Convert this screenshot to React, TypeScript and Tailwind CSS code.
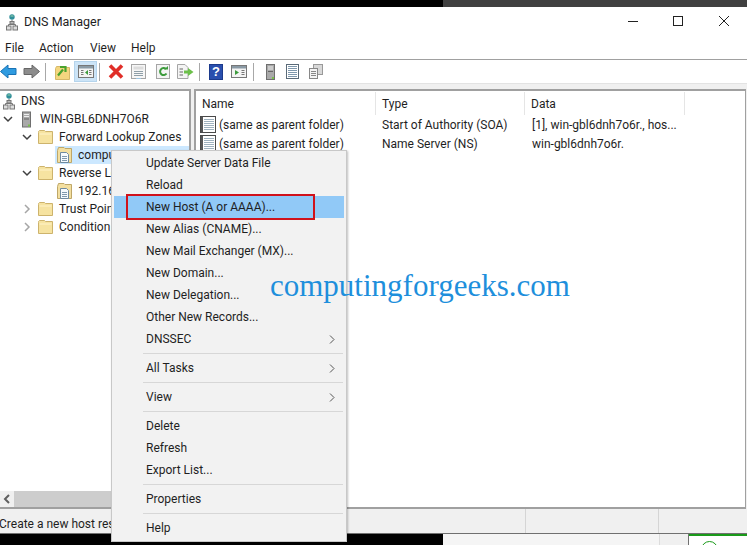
import React from "react";

const Folder = () => (
  <svg width="15" height="14" viewBox="0 0 15 14" className="shrink-0">
    <path d="M.5 2.500V13.500H14.500V1.500H7.500L6.500 .5H1.500L.5 1.500Z" fill="#f6e3a1" stroke="#cdb36c" />
    <path d="M1.500 4H13.500" stroke="#fff3c9" />
  </svg>
);
const Zone = () => (
  <svg width="15" height="16" viewBox="0 0 15 16" className="shrink-0">
    <path d="M.5 3.500V15.500H14.500V1.500H8L7 .5H1.500Z" fill="#f3dfa0" stroke="#bfa768" />
    <path d="M3.500 5.500H9.500L11.500 7.500V15.500H3.500Z" fill="#f6fafd" stroke="#6f8aa0" />
    <path d="M5 9.500H10M5 11.500H10M5 13.500H10" stroke="#7f98ad" />
  </svg>
);
const NetIcon = () => (
  <svg width="12" height="17" viewBox="0 0 12 17" className="shrink-0">
    <circle cx="6" cy="3" r="2.700" fill="#2f8f9a" />
    <path d="M4.500 2H7.500" stroke="#9ad0a8" />
    <path d="M6 6V10M2.500 12V10.500H9.500V12" stroke="#777" fill="none" />
    <rect x="4" y="7.500" width="4" height="2.500" fill="#bbb" stroke="#777" />
    <rect x=".5" y="12" width="4.500" height="4" fill="#ddd" stroke="#777" />
    <rect x="7" y="12" width="4.500" height="4" fill="#ddd" stroke="#777" />
  </svg>
);
const Server = ({ h = 16 }: { h?: number }) => (
  <svg width="9" height={h} viewBox="0 0 9 16" className="shrink-0">
    <rect x=".5" y=".5" width="8" height="15" fill="#a9a9a9" stroke="#6f6f6f" />
    <path d="M2 3H7M2 5H7" stroke="#eee" />
    <rect x="2" y="7" width="5" height="1" fill="#666" />
    <rect x="6" y="13" width="2" height="2" fill="#79c04a" />
  </svg>
);
const Chevron = ({ open, light }: { open?: boolean; light?: boolean }) => (
  <svg width="10" height="10" viewBox="0 0 10 10" className="shrink-0">
    <path
      d={open ? "M1 3L5 7L9 3" : "M3 1L7 5L3 9"}
      fill="none"
      stroke={light ? "#a6a6a6" : "#404040"}
      strokeWidth="1.500"
    />
  </svg>
);
const RecordIcon = () => (
  <svg width="16" height="17" viewBox="0 0 16 17" className="shrink-0">
    <rect x=".5" y=".5" width="15" height="16" fill="#fff" stroke="#4a4a4a" />
    <rect x="1" y="1" width="2" height="15" fill="#555" />
    <path d="M4 3.500H14M4 5.500H14M4 7.500H14M4 9.500H14M4 11.500H14M4 13.500H14" stroke="#9fb2bf" />
  </svg>
);

const Sep = ({ ml, mr }: { ml: string; mr: string }) => (
  <div className={`w-px h-[18px] bg-[#a8a8a8] shrink-0 ${ml} ${mr}`} />
);

const Toolbar = () => (
  <div className="h-[23px] flex items-center bg-white shrink-0">
    <svg width="17" height="15" viewBox="0 0 17 15" className="shrink-0">
      <path d="M8 1L.5 7.500L8 14V10.500H16V4.500H8Z" fill="#2f9be0" stroke="#1872b5" />
    </svg>
    <svg width="17" height="15" viewBox="0 0 17 15" className="ml-[6px] shrink-0">
      <path d="M9 1L16.500 7.500L9 14V10.500H1V4.500H9Z" fill="#8c8c8c" stroke="#666" />
    </svg>
    <Sep ml="ml-[5px]" mr="mr-[9px]" />
    <svg width="15" height="16" viewBox="0 0 15 16" className="shrink-0">
      <path d="M.5 4.500V15.500H14.500V3.500H8L7 2.500H1.500Z" fill="#f4d67f" stroke="#d6b869" />
      <path d="M3 11.500L8 5.500M5 3H10.500V8" fill="none" stroke="#4aa32e" strokeWidth="2.200" />
    </svg>
    <div className="ml-[4px] mr-[2px] w-[23px] h-[21px] bg-[#cce4f7] border border-[#b5d4ec] flex items-center justify-center shrink-0">
      <svg width="16" height="13" viewBox="0 0 16 13">
        <rect x=".5" y=".5" width="15" height="12" fill="#f4f4f4" stroke="#777" />
        <rect x="1" y="1" width="14" height="2.500" fill="#8a9aa5" />
        <path d="M3 5.500H5.500M3 7.500H5.500M3 9.500H5.500M11 5.500H13.500M11 7.500H13.500M11 9.500H13.500" stroke="#777" />
        <path d="M10 5L7 7.500L10 10Z" fill="#3c9b3c" />
      </svg>
    </div>
    <Sep ml="" mr="mr-[8px]" />
    <svg width="16" height="15" viewBox="0 0 16 15" className="shrink-0">
      <path d="M2 1.500L14 13.500M14 1.500L2 13.500" stroke="#e02e28" strokeWidth="3.600" />
    </svg>
    <svg width="15" height="15" viewBox="0 0 15 15" className="ml-[7px] shrink-0">
      <rect x=".5" y=".5" width="14" height="14" fill="#f6f6f6" stroke="#a5a5a5" />
      <rect x="2.500" y="2.500" width="10" height="3" fill="#dcdcdc" />
      <path d="M3 7.500H12M3 9.500H12M3 11.500H12" stroke="#8f9fa8" />
      <path d="M5 14.500H10" stroke="#9bc4e2" />
    </svg>
    <svg width="14" height="15" viewBox="0 0 14 15" className="ml-[10px] shrink-0">
      <rect x=".5" y=".5" width="13" height="14" fill="#f4f4f4" stroke="#a5a5a5" />
      <path d="M10 5A3.500 3.500 0 1 0 10.500 9.500" fill="none" stroke="#3c9b3c" strokeWidth="2" />
      <path d="M8 5.500H12V2Z" fill="#3c9b3c" />
    </svg>
    <svg width="17" height="15" viewBox="0 0 17 15" className="ml-[7px] shrink-0">
      <path d="M.5 .5H8L11 3.500V14.500H.5Z" fill="#f4f4f4" stroke="#a5a5a5" />
      <path d="M2.500 5H6M2.500 8H6M2.500 11H6" stroke="#666" />
      <path d="M7 6.500H11V4L16.500 8L11 12V9.500H7Z" fill="#6cc04a" />
    </svg>
    <Sep ml="ml-[5px]" mr="mr-[9px]" />
    <div className="w-[14px] h-[16px] bg-[#2a4fae] border border-[#1c3a8c] flex items-center justify-center shrink-0 text-white text-[13px] font-bold leading-none [font-family:'Liberation_Sans',sans-serif]">
      ?
    </div>
    <svg width="16" height="13" viewBox="0 0 16 13" className="ml-[8px] shrink-0">
      <rect x=".5" y=".5" width="15" height="12" fill="#f4f4f4" stroke="#777" />
      <rect x="1" y="1" width="14" height="2.500" fill="#8a9aa5" />
      <path d="M10.500 5.500H13.500M10.500 7.500H13.500M10.500 9.500H13.500" stroke="#777" />
      <path d="M4 5L8 7.500L4 10Z" fill="#3c9b3c" />
    </svg>
    <Sep ml="ml-[6px]" mr="mr-[12px]" />
    <Server />
    <svg width="13" height="15" viewBox="0 0 13 15" className="ml-[11px] shrink-0">
      <rect x=".5" y=".5" width="12" height="14" fill="#fff" stroke="#5a6a78" />
      <path d="M2 2.500H11M2 4.500H11M2 6.500H11M2 8.500H11M2 10.500H11M2 12.500H11" stroke="#7f98ad" />
    </svg>
    <svg width="14" height="15" viewBox="0 0 14 15" className="ml-[10px] shrink-0">
      <rect x="4.500" y=".5" width="9" height="10" fill="#d8d8d8" stroke="#999" />
      <rect x=".5" y="4.500" width="8" height="10" fill="#f4f4f4" stroke="#888" />
      <path d="M2 7.500H7M2 9.500H7M2 11.500H7" stroke="#888" />
    </svg>
  </div>
);

const TreeRow = ({
  indent,
  chevron,
  icon,
  label,
  selected,
}: {
  indent: number;
  chevron?: React.ReactNode;
  icon: React.ReactNode;
  label: string;
  selected?: boolean;
}) => (
  <div className="h-[18px] flex items-center whitespace-nowrap" style={{ paddingLeft: indent }}>
    {chevron && <div className="w-[16px] flex items-center shrink-0">{chevron}</div>}
    <div className={`flex flex-1 items-center h-[18px] ${selected ? "bg-[#cce8ff] pl-[2px]" : ""}`}>
      <div className="w-[21px] flex shrink-0">{icon}</div>
      <span>{label}</span>
    </div>
  </div>
);

const Tree = () => (
  <div className="w-[191px] shrink-0 border-2 border-l-0 border-[#a0a0a0] bg-white flex flex-col overflow-hidden">
    <div className="flex-1 pt-px">
      <div className="h-[18px] flex items-center pl-[3px] whitespace-nowrap">
        <NetIcon />
        <span className="ml-[6px]">DNS</span>
      </div>
      <div className="h-[18px] flex items-center pl-[3px] whitespace-nowrap">
        <div className="w-[19px] shrink-0 flex"><Chevron open /></div>
        <Server h={17} />
        <span className="ml-[9px]">WIN-GBL6DNH7O6R</span>
      </div>
      <TreeRow indent={22} chevron={<Chevron open />} icon={<Folder />} label="Forward Lookup Zones" />
      <TreeRow indent={55} icon={<Zone />} label="compu" selected />
      <TreeRow indent={22} chevron={<Chevron open />} icon={<Folder />} label="Reverse Lo" />
      <TreeRow indent={57} icon={<Zone />} label="192.16" />
      <TreeRow indent={22} chevron={<Chevron light />} icon={<Folder />} label="Trust Poin" />
      <TreeRow indent={22} chevron={<Chevron light />} icon={<Folder />} label="Condition" />
    </div>
    <div className="h-[16px] flex bg-[#f0f0f0] shrink-0">
      <div className="w-[14px] flex items-center justify-center">
        <svg width="8" height="10" viewBox="0 0 8 10">
          <path d="M6 1L2 5L6 9" fill="none" stroke="#606060" strokeWidth="2" />
        </svg>
      </div>
      <div className="w-[100px] bg-[#cdcdcd]" />
    </div>
  </div>
);

const rows = [
  ["Start of Authority (SOA)", "[1], win-gbl6dnh7o6r., hos..."],
  ["Name Server (NS)", "win-gbl6dnh7o6r."],
];

const Records = () => (
  <div className="flex-1 mr-px border-2 border-r border-[#a0a0a0] bg-white overflow-hidden">
    <div className="h-[24px] flex whitespace-nowrap pt-px">
      <div className="w-[180px] pl-[6px] flex items-center border-r border-[#e5e5e5]">Name</div>
      <div className="w-[149px] pl-[6px] flex items-center border-r border-[#e5e5e5]">Type</div>
      <div className="w-[160px] pl-[6px] flex items-center border-r border-[#e5e5e5]">Data</div>
    </div>
    {rows.map(([type, data]) => (
      <div key={type} className="h-[19px] flex items-center whitespace-nowrap">
        <div className="w-[180px] pl-[4px] flex items-center gap-[3px]">
          <RecordIcon />
          <span>(same as parent folder)</span>
        </div>
        <div className="w-[150px] pl-[6px]">{type}</div>
        <div className="pl-[6px]">{data}</div>
      </div>
    ))}
  </div>
);

const MItem = ({ label, arrow, hi }: { label: string; arrow?: boolean; hi?: boolean }) => (
  <div className={`h-[22px] mx-[2px] flex items-center pl-[32px] pr-[9px] justify-between ${hi ? "bg-[#91c9f7]" : ""}`}>
    <span>{label}</span>
    {arrow && (
      <svg width="6" height="9" viewBox="0 0 6 9">
        <path d="M1 .5L5 4.500L1 8.500" fill="none" stroke="#555" />
      </svg>
    )}
  </div>
);
const MSep = () => (
  <div className="h-[7px] flex items-center pl-[31px] pr-[3px]">
    <div className="h-px flex-1 bg-[#d7d7d7]" />
  </div>
);

const Menu = () => (
  <div className="absolute left-[111px] top-[150px] w-[236px] h-[392px] bg-[#f2f2f2] border border-[#c8c8c8] pt-px shadow-[1px_1px_2px_rgba(0,0,0,0.25)]">
    <MItem label="Update Server Data File" />
    <MItem label="Reload" />
    <MItem label="New Host (A or AAAA)..." hi />
    <MItem label="New Alias (CNAME)..." />
    <MItem label="New Mail Exchanger (MX)..." />
    <MItem label="New Domain..." />
    <MItem label="New Delegation..." />
    <MItem label="Other New Records..." />
    <MItem label="DNSSEC" arrow />
    <MSep />
    <MItem label="All Tasks" arrow />
    <MSep />
    <MItem label="View" arrow />
    <MSep />
    <MItem label="Delete" />
    <MItem label="Refresh" />
    <MItem label="Export List..." />
    <MSep />
    <MItem label="Properties" />
    <MSep />
    <MItem label="Help" />
    <div className="absolute left-[14px] top-[43px] w-[189px] h-[26px] border-[2px] border-[#d0121b]" />
  </div>
);

export default function App() {
  return (
    <div className="relative w-[747px] h-[545px] overflow-hidden bg-black flex flex-col text-[12px] leading-none text-[#1f1f1f] [font-family:'Roboto',sans-serif]">
      <div className="h-[7px] flex shrink-0">
        <div className="w-[443px] bg-black" />
        <div className="flex-1 bg-[#404040]" />
      </div>
      <div className="bg-white h-[33px] flex items-center shrink-0 pl-[6px] pb-[3px]">
        <NetIcon />
        <span className="ml-[6px] text-[12.500px]">DNS Manager</span>
        <div className="flex-1" />
        <svg width="10" height="10" viewBox="0 0 10 10" className="mr-[35px] -mt-[2px]">
          <path d="M0 5.500H10" stroke="#222" />
        </svg>
        <svg width="10" height="10" viewBox="0 0 10 10" className="mr-[36px] -mt-[2px]">
          <rect x=".5" y=".5" width="9" height="9" fill="none" stroke="#222" />
        </svg>
        <svg width="10" height="10" viewBox="0 0 10 10" className="mr-[18px] -mt-[2px]">
          <path d="M0 0L10 10M10 0L0 10" stroke="#222" />
        </svg>
      </div>
      <div className="bg-white h-[20px] flex items-center shrink-0 border-b border-[#a0a0a0] pl-[5px] pb-[3px]">
        <span className="w-[34px]">File</span>
        <span className="w-[51px]">Action</span>
        <span className="w-[41px]">View</span>
        <span>Help</span>
      </div>
      <Toolbar />
      <div className="h-[6px] bg-[#f0f0f0] border-t border-[#e3e3e3] shrink-0" />
      <div className="h-[420px] flex bg-[#f0f0f0] shrink-0">
        <Tree />
        <div className="w-[3px] shrink-0" />
        <Records />
      </div>
      <div className="h-[24px] bg-[#f0f0f0] flex shrink-0 whitespace-nowrap">
        <div className="w-[527px] h-full flex items-center border-r border-[#d5d5d5] pt-[5px] -ml-px">
          Create a new host res
        </div>
        <div className="w-[133px] h-full border-r border-[#d5d5d5]" />
      </div>
      <div className="flex-1 border-t border-[#707070] flex">
        <div className="w-[443px] bg-black" />
        <div className="w-[217px] bg-[#f5f5f5] border-r border-[#dcdcdc]" />
        <div className="w-[28px] bg-[#f0f0f0]" />
        <div className="flex-1 bg-white border-l border-[#707070] relative overflow-hidden">
          <div className="h-[2px] bg-[#1a9a1a]" />
          <div className="absolute left-[12px] top-[7px] w-[17px] h-[17px] rounded-full border border-[#1a9a1a]" />
        </div>
      </div>
      <Menu />
      <div className="absolute left-[270px] top-[269px] text-[31px] leading-[34px] text-[#1e8fdc] whitespace-nowrap [font-family:'Liberation_Serif',serif]">
        computingforgeeks.com
      </div>
    </div>
  );
}
